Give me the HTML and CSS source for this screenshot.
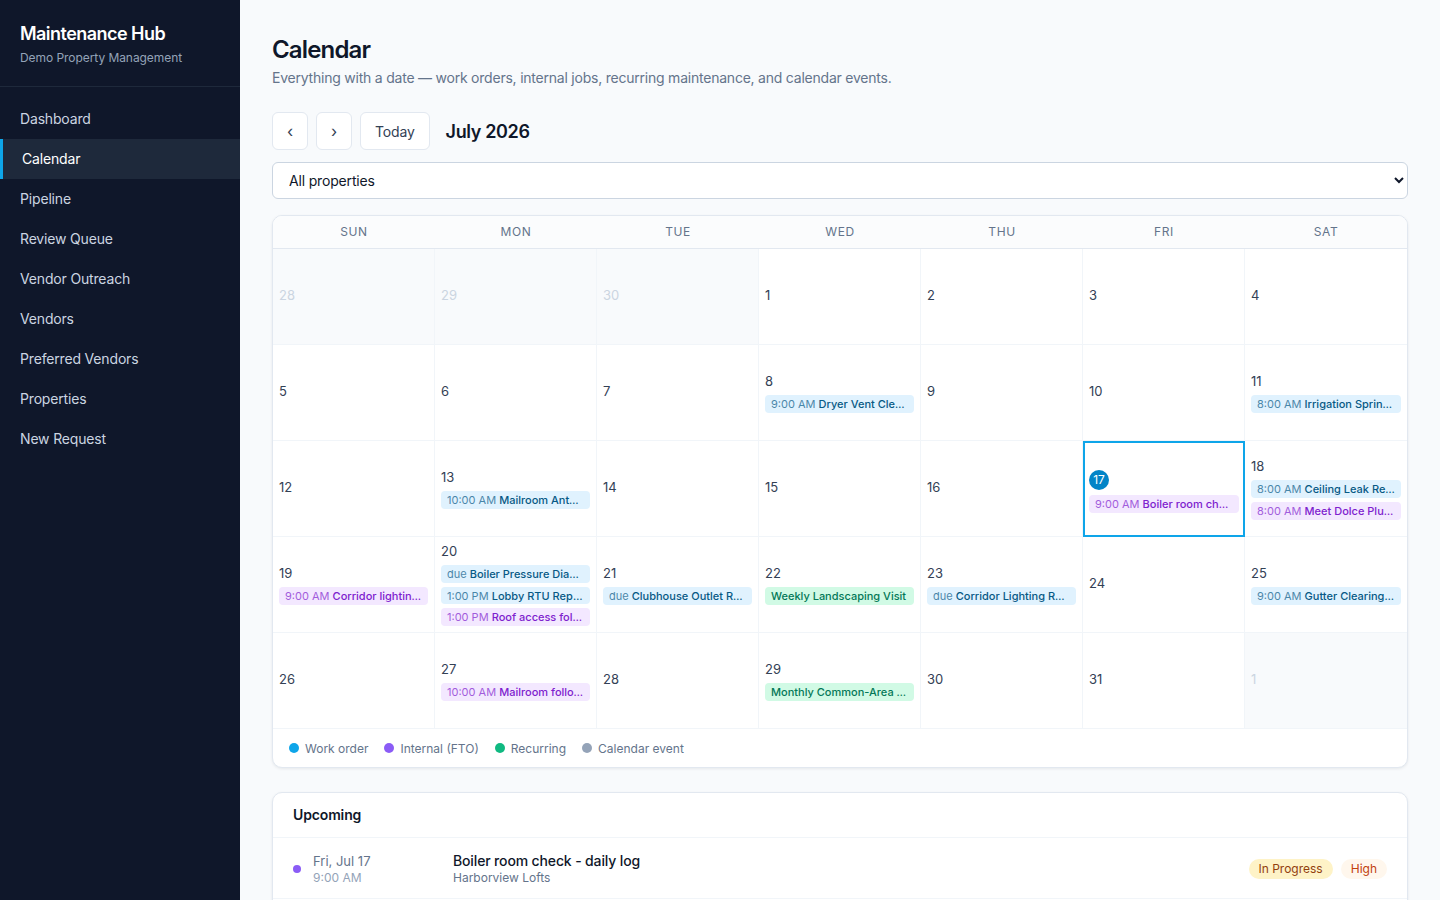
FILE: index.html
```html
<!DOCTYPE html>
<html lang="en">
<head>
  <meta charset="UTF-8" />
  <meta name="viewport" content="width=device-width, initial-scale=1" />
  <title>Calendar · Maintenance Hub</title>
  <link rel="stylesheet" href="styles.css">
</head>
<body>
  <div class="layout">
    <aside class="sidebar">
      <div class="brand">
        <div class="brand-name">Maintenance Hub</div>
        <div class="brand-sub">Demo Property Management</div>
      </div>
      <nav class="nav">
        <a href="#">Dashboard</a>
        <a href="#" class="active">Calendar</a>
        <a href="#">Pipeline</a>
        <a href="#">Review Queue</a>
        <a href="#">Vendor Outreach</a>
        <a href="#">Vendors</a>
        <a href="#">Preferred Vendors</a>
        <a href="#">Properties</a>
        <a href="#">New Request</a>
      </nav>
    </aside>

    <main class="main">
      <h1>Calendar</h1>
      <p class="subtitle">Everything with a date — work orders, internal jobs, recurring maintenance, and calendar events.</p>

      <div class="toolbar">
        <button class="btn btn-icon">‹</button>
        <button class="btn btn-icon">›</button>
        <button class="btn">Today</button>
        <h2 class="month">July 2026</h2>
      </div>

      <select class="property-select">
        <option>All properties</option>
        <option>Harborview Lofts</option>
      </select>

      <div class="card calendar">
        <div class="weekdays">
          <div>Sun</div><div>Mon</div><div>Tue</div><div>Wed</div><div>Thu</div><div>Fri</div><div>Sat</div>
        </div>

        <div class="grid">
          <!-- week 1 -->
          <div class="day outside"><span class="num">28</span></div>
          <div class="day outside"><span class="num">29</span></div>
          <div class="day outside"><span class="num">30</span></div>
          <div class="day"><span class="num">1</span></div>
          <div class="day"><span class="num">2</span></div>
          <div class="day"><span class="num">3</span></div>
          <div class="day"><span class="num">4</span></div>

          <!-- week 2 -->
          <div class="day"><span class="num">5</span></div>
          <div class="day"><span class="num">6</span></div>
          <div class="day"><span class="num">7</span></div>
          <div class="day">
            <span class="num">8</span>
            <div class="chip wo"><span class="t">9:00 AM</span> <b>Dryer Vent Cleaning</b></div>
          </div>
          <div class="day"><span class="num">9</span></div>
          <div class="day"><span class="num">10</span></div>
          <div class="day">
            <span class="num">11</span>
            <div class="chip wo"><span class="t">8:00 AM</span> <b>Irrigation Sprinkler Repair</b></div>
          </div>

          <!-- week 3 -->
          <div class="day"><span class="num">12</span></div>
          <div class="day">
            <span class="num">13</span>
            <div class="chip wo"><span class="t">10:00 AM</span> <b>Mailroom Antenna Fix</b></div>
          </div>
          <div class="day"><span class="num">14</span></div>
          <div class="day"><span class="num">15</span></div>
          <div class="day"><span class="num">16</span></div>
          <div class="day today">
            <span class="num">17</span>
            <div class="chip fto"><span class="t">9:00 AM</span> <b>Boiler room check - daily log</b></div>
          </div>
          <div class="day">
            <span class="num">18</span>
            <div class="chip wo"><span class="t">8:00 AM</span> <b>Ceiling Leak Repair</b></div>
            <div class="chip fto"><span class="t">8:00 AM</span> <b>Meet Dolce Plumbing</b></div>
          </div>

          <!-- week 4 -->
          <div class="day">
            <span class="num">19</span>
            <div class="chip fto"><span class="t">9:00 AM</span> <b>Corridor lighting walk</b></div>
          </div>
          <div class="day">
            <span class="num">20</span>
            <div class="chip wo"><span class="t">due</span> <b>Boiler Pressure Diagnostic</b></div>
            <div class="chip wo"><span class="t">1:00 PM</span> <b>Lobby RTU Repair</b></div>
            <div class="chip fto"><span class="t">1:00 PM</span> <b>Roof access follow-up</b></div>
          </div>
          <div class="day">
            <span class="num">21</span>
            <div class="chip wo"><span class="t">due</span> <b>Clubhouse Outlet Replacement</b></div>
          </div>
          <div class="day">
            <span class="num">22</span>
            <div class="chip rec"><b>Weekly Landscaping Visit</b></div>
          </div>
          <div class="day">
            <span class="num">23</span>
            <div class="chip wo"><span class="t">due</span> <b>Corridor Lighting Repair</b></div>
          </div>
          <div class="day"><span class="num">24</span></div>
          <div class="day">
            <span class="num">25</span>
            <div class="chip wo"><span class="t">9:00 AM</span> <b>Gutter Clearing &amp; Downspouts</b></div>
          </div>

          <!-- week 5 -->
          <div class="day"><span class="num">26</span></div>
          <div class="day">
            <span class="num">27</span>
            <div class="chip fto"><span class="t">10:00 AM</span> <b>Mailroom follow-up</b></div>
          </div>
          <div class="day"><span class="num">28</span></div>
          <div class="day">
            <span class="num">29</span>
            <div class="chip rec"><b>Monthly Common-Area Inspection</b></div>
          </div>
          <div class="day"><span class="num">30</span></div>
          <div class="day"><span class="num">31</span></div>
          <div class="day outside"><span class="num">1</span></div>
        </div>

        <div class="legend">
          <span><i class="dot wo"></i>Work order</span>
          <span><i class="dot fto"></i>Internal (FTO)</span>
          <span><i class="dot rec"></i>Recurring</span>
          <span><i class="dot evt"></i>Calendar event</span>
        </div>
      </div>

      <div class="card upcoming">
        <div class="upcoming-head">Upcoming</div>

        <div class="up-row">
          <i class="dot fto"></i>
          <div class="up-date">Fri, Jul 17<small>9:00 AM</small></div>
          <div class="up-title">Boiler room check - daily log<small>Harborview Lofts</small></div>
          <div class="badges">
            <span class="badge progress">In Progress</span>
            <span class="badge high">High</span>
          </div>
        </div>

        <div class="up-row">
          <i class="dot wo"></i>
          <div class="up-date">Sat, Jul 18<small>8:00 AM</small></div>
          <div class="up-title">Ceiling Leak Repair<small>Harborview Lofts</small></div>
          <div class="badges">
            <span class="badge scheduled">Scheduled</span>
          </div>
        </div>

        <div class="up-row">
          <i class="dot fto"></i>
          <div class="up-date">Sat, Jul 18<small>8:00 AM</small></div>
          <div class="up-title">Meet Dolce Plumbing<small>Harborview Lofts</small></div>
          <div class="badges">
            <span class="badge progress">In Progress</span>
          </div>
        </div>
      </div>
    </main>
  </div>
</body>
</html>
```

FILE: styles.css
```css
* {
  box-sizing: border-box;
}

body {
  margin: 0;
  font-family: Inter, "Noto Sans", sans-serif;
  background: #f8fafc;
  color: #0f172a;
}

.layout {
  display: flex;
  min-height: 100vh;
}

/* sidebar */
.sidebar {
  width: 240px;
  flex-shrink: 0;
  background: #0f172a;
  color: #cbd5e1;
}

.brand {
  padding: 22px 20px 20px;
  border-bottom: 1px solid #1e293b;
}

.brand-name {
  font-size: 18px;
  line-height: 24px;
  font-weight: 600;
  color: #fff;
  letter-spacing: -0.03em;
}

.brand-sub {
  margin-top: 4px;
  font-size: 12px;
  line-height: 16px;
  color: #94a3b8;
  letter-spacing: -0.005em;
}

.nav {
  padding-top: 12px;
}

.nav a {
  display: block;
  height: 40px;
  line-height: 40px;
  padding-left: 20px;
  font-size: 14px;
  letter-spacing: -0.012em;
  color: #cbd5e1;
  text-decoration: none;
}

.nav a.active {
  background: #1e293b;
  color: #fff;
  border-left: 3px solid #0ea5e9;
  padding-left: 19px;
}

/* main */
.main {
  flex: 1;
  padding: 34px 32px 40px;
  min-width: 0;
}

h1 {
  margin: 0;
  font-size: 24px;
  line-height: 32px;
  font-weight: 600;
  letter-spacing: -0.035em;
}

.subtitle {
  margin: 2px 0 0;
  font-size: 14px;
  line-height: 20px;
  letter-spacing: -0.016em;
  color: #64748b;
}

.toolbar {
  display: flex;
  align-items: center;
  gap: 8px;
  margin-top: 24px;
}

.btn {
  height: 38px;
  padding: 0 14px;
  background: #fff;
  border: 1px solid #e2e8f0;
  border-radius: 6px;
  font-family: inherit;
  font-size: 14px;
  letter-spacing: -0.012em;
  color: #334155;
}

.btn-icon {
  width: 36px;
  padding: 0;
  font-size: 16px;
}

.month {
  margin: 0 0 0 8px;
  font-size: 18px;
  font-weight: 600;
  letter-spacing: -0.02em;
}

.property-select {
  display: block;
  width: 100%;
  height: 37px;
  margin-top: 12px;
  padding: 0 12px;
  background: #fff;
  border: 1px solid #cbd5e1;
  border-radius: 6px;
  font-family: inherit;
  font-size: 14px;
  letter-spacing: -0.012em;
  color: #0f172a;
}

.card {
  background: #fff;
  border: 1px solid #e2e8f0;
  border-radius: 10px;
  box-shadow: 0 1px 3px rgba(15, 23, 42, 0.08);
  overflow: hidden;
}

.calendar {
  margin-top: 16px;
}

.weekdays {
  display: grid;
  grid-template-columns: repeat(7, 1fr);
  height: 33px;
  background: #fbfcfd;
  border-bottom: 1px solid #e2e8f0;
}

.weekdays div {
  text-align: center;
  line-height: 32px;
  font-size: 12px;
  letter-spacing: 0.05em;
  text-transform: uppercase;
  color: #64748b;
}

.grid {
  display: grid;
  grid-template-columns: repeat(7, 1fr);
  grid-auto-rows: 96px;
}

.day {
  display: flex;
  flex-direction: column;
  justify-content: center;
  gap: 4px;
  padding: 6px;
  min-width: 0;
  border-right: 1px solid #f1f5f9;
  border-bottom: 1px solid #f1f5f9;
}

.day:nth-child(7n) {
  border-right: none;
}

.day.outside {
  background: #f8fafc;
}

.num {
  font-size: 13px;
  line-height: 16px;
  margin-bottom: 2px;
  color: #334155;
}

.num:only-child {
  margin-bottom: 4px;
}

.outside .num {
  color: #cbd5e1;
}

.day.today {
  border: 2px solid #0ea5e9;
  padding: 8px 4px 4px;
}

.today .num {
  width: 20px;
  height: 20px;
  line-height: 20px;
  margin-bottom: 1px;
  border-radius: 50%;
  background: #0284c7;
  color: #fff;
  text-align: center;
  font-size: 12px;
}

.chip {
  height: 18px;
  line-height: 18px;
  padding: 0 6px;
  border-radius: 4px;
  font-size: 11px;
  white-space: nowrap;
  overflow: hidden;
  text-overflow: ellipsis;
}

.chip b {
  font-weight: 500;
}

.chip .t {
  opacity: 0.7;
}

.chip.wo {
  background: #e0f2fe;
  color: #075985;
}

.chip.fto {
  background: #f3e8ff;
  color: #7e22ce;
}

.chip.rec {
  background: #d1fae5;
  color: #047857;
}

.legend {
  display: flex;
  align-items: center;
  gap: 16px;
  height: 38px;
  padding: 0 16px;
  font-size: 12px;
  color: #64748b;
}

.legend span {
  display: flex;
  align-items: center;
  gap: 6px;
}

.dot {
  display: inline-block;
  width: 10px;
  height: 10px;
  border-radius: 50%;
}

.dot.wo { background: #0ea5e9; }
.dot.fto { background: #8b5cf6; }
.dot.rec { background: #10b981; }
.dot.evt { background: #94a3b8; }

/* upcoming */
.upcoming {
  margin-top: 24px;
}

.upcoming-head {
  padding: 12px 20px;
  font-size: 14px;
  line-height: 20px;
  font-weight: 600;
  letter-spacing: -0.01em;
  border-bottom: 1px solid #f1f5f9;
}

.up-row {
  display: flex;
  align-items: center;
  padding: 14px 20px 12px;
  border-bottom: 1px solid #f1f5f9;
}

.up-row .dot {
  width: 8px;
  height: 8px;
  margin-right: 12px;
}

.up-date {
  width: 140px;
  font-size: 13px;
  line-height: 18px;
  color: #64748b;
}

.up-date small,
.up-title small {
  display: block;
  font-size: 12px;
  line-height: 16px;
  color: #94a3b8;
}

.up-title {
  flex: 1;
  font-size: 14px;
  line-height: 18px;
  font-weight: 500;
  letter-spacing: -0.01em;
}

.up-title small {
  color: #64748b;
  font-weight: 400;
  letter-spacing: 0;
}

.badges {
  display: flex;
  gap: 8px;
}

.badge {
  padding: 2px 10px;
  border-radius: 999px;
  font-size: 12px;
  line-height: 16px;
}

.badge.progress {
  background: #fef3c7;
  color: #92400e;
}

.badge.high {
  background: #fff7ed;
  color: #c2410c;
}

.badge.scheduled {
  background: #e0f2fe;
  color: #075985;
}
```
